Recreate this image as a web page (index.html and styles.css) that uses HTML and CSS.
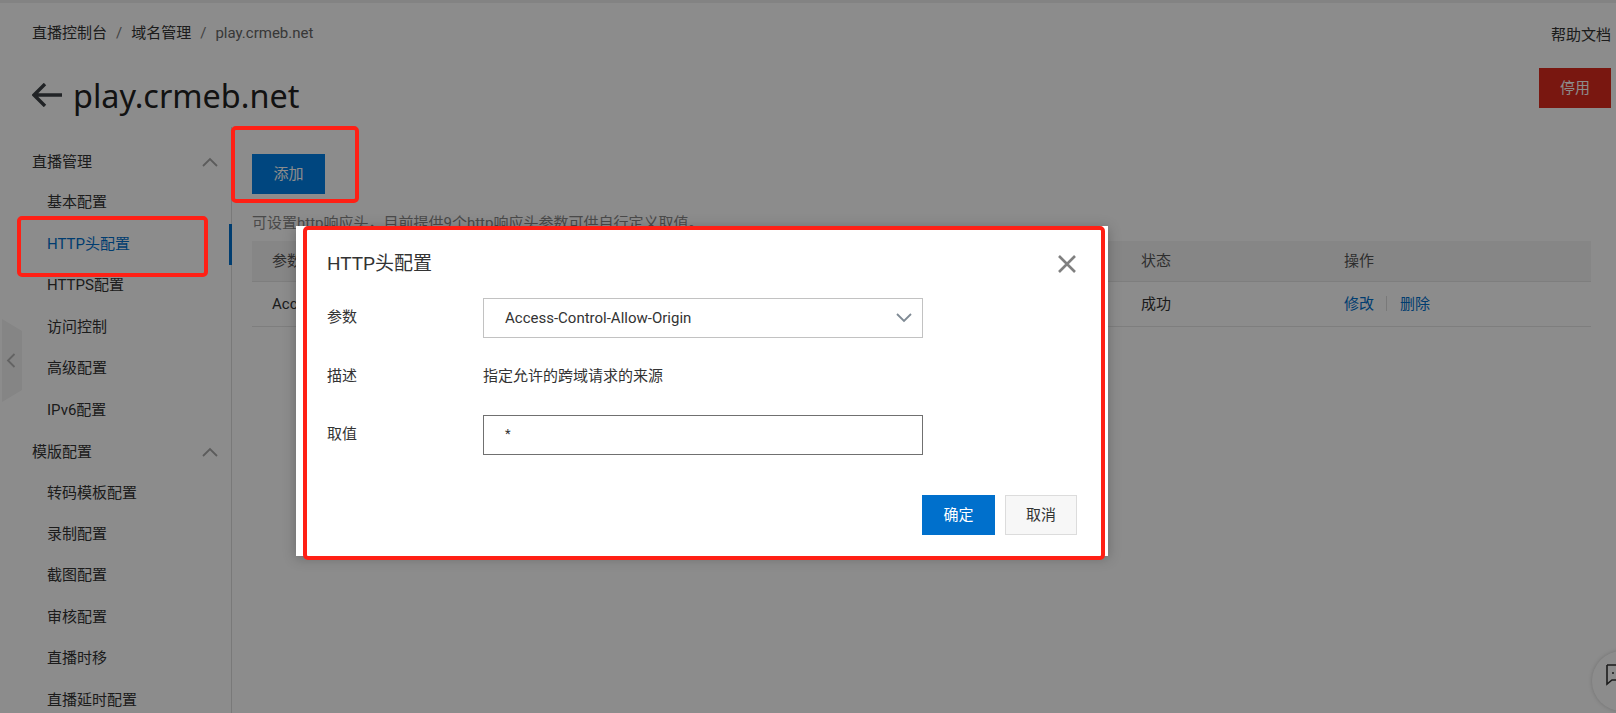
FILE: index.html
```html
<!DOCTYPE html>
<html lang="zh-CN">

<head>
  <meta charset="UTF-8">
  <meta name="viewport" content="width=device-width, initial-scale=1.0">
  <title>play.crmeb.net</title>
  <link rel="stylesheet" href="styles.css">
</head>

<body>

  <div class="topline"></div>

  <div class="header">
    <div class="crumbs">
      <a href="#">直播控制台</a>
      <span class="sep">/</span>
      <a href="#">域名管理</a>
      <span class="sep">/</span>
      <span class="current">play.crmeb.net</span>
    </div>
    <a href="#" class="help-link">帮助文档</a>
  </div>

  <div class="title-row">
    <div class="title">
      <svg class="back-icon" width="30" height="24" viewBox="0 0 30 24">
        <path d="M13 1 L2 12 L13 23 M2 12 H30" fill="none" stroke="#3c4146" stroke-width="3.4"></path>
      </svg>
      <h1>play.crmeb.net</h1>
    </div>
    <button class="stop-button">停用</button>
  </div>

  <div class="columns">
    <div class="sidebar">
      <div class="group">直播管理
        <svg width="16" height="10" viewBox="0 0 16 10"><path d="M1 9 L8 2 L15 9" fill="none" stroke="#a8a8a8" stroke-width="1.8"></path></svg>
      </div>
      <a href="#" class="item">基本配置</a>
      <a href="#" class="item active">HTTP头配置</a>
      <a href="#" class="item">HTTPS配置</a>
      <a href="#" class="item">访问控制</a>
      <a href="#" class="item">高级配置</a>
      <a href="#" class="item">IPv6配置</a>
      <div class="group">模版配置
        <svg width="16" height="10" viewBox="0 0 16 10"><path d="M1 9 L8 2 L15 9" fill="none" stroke="#a8a8a8" stroke-width="1.8"></path></svg>
      </div>
      <a href="#" class="item">转码模板配置</a>
      <a href="#" class="item">录制配置</a>
      <a href="#" class="item">截图配置</a>
      <a href="#" class="item">审核配置</a>
      <a href="#" class="item">直播时移</a>
      <a href="#" class="item">直播延时配置</a>
    </div>

    <div class="main">
      <button class="add-button">添加</button>
      <p class="hint">可设置http响应头，目前提供9个http响应头参数可供自行定义取值。</p>

      <table class="list">
        <tr>
          <th class="col-name">参数</th>
          <th class="col-state">状态</th>
          <th>操作</th>
        </tr>
        <tr>
          <td>Access-Control-Allow-Origin</td>
          <td>成功</td>
          <td>
            <a href="#">修改</a><span class="bar"></span><a href="#">删除</a>
          </td>
        </tr>
      </table>
    </div>
  </div>

  <div class="collapse-handle">
    <svg width="10" height="15" viewBox="0 0 10 15"><path d="M8.5 1 L2 7.5 L8.5 14" fill="none" stroke="#b4b4b4" stroke-width="1.8"></path></svg>
  </div>

  <div class="chat-float">
    <svg width="12" height="22" viewBox="0 0 12 22"><path d="M1 1 H12 M1 1 V20 L6 16 H12 M6 9 h2" fill="none" stroke="#333" stroke-width="1.6"></path></svg>
  </div>

  <div class="overlay"></div>

  <div class="modal">
    <div class="modal-head">
      <h2>HTTP头配置</h2>
      <svg width="18" height="18" viewBox="0 0 18 18"><path d="M1 1 L17 17 M17 1 L1 17" fill="none" stroke="#808080" stroke-width="2.6"></path></svg>
    </div>

    <div class="form-row">
      <label>参数</label>
      <div class="field select">
        <span>Access-Control-Allow-Origin</span>
        <svg width="16" height="10" viewBox="0 0 16 10"><path d="M1 1 L8 8 L15 1" fill="none" stroke="#7f8a94" stroke-width="1.8"></path></svg>
      </div>
    </div>

    <div class="form-row desc-row">
      <label>描述</label>
      <div class="desc-text">指定允许的跨域请求的来源</div>
    </div>

    <div class="form-row">
      <label>取值</label>
      <div class="field value">*</div>
    </div>

    <div class="modal-foot">
      <button class="ok-button">确定</button>
      <button class="cancel-button">取消</button>
    </div>
  </div>

  <div class="mark mark-add"></div>
  <div class="mark mark-nav"></div>
  <div class="mark mark-modal"></div>

</body>

</html>
```

FILE: styles.css
```css
* {
  box-sizing: border-box;
}

html,
body {
  height: 100%;
}

body {
  margin: 0;
  overflow: hidden;
  background: white;
  color: #333;
  font-family: Roboto, "Noto Sans CJK SC", sans-serif;
  font-size: 15px;
  line-height: 20px;
}

a {
  color: inherit;
  text-decoration: none;
}

button {
  padding: 0 0 3px;
  border: none;
  font-family: inherit;
  font-size: 15px;
  cursor: pointer;
}

.topline {
  height: 3px;
  background: #efefef;
}

.header {
  display: flex;
  justify-content: space-between;
  padding: 20px 5px 0 32px;
}

.crumbs {
  display: flex;
}

.sep {
  margin: 0 9px;
  color: #777;
}

.current {
  color: #666;
}

.help-link {
  margin-top: 2px;
}

.title-row {
  display: flex;
  justify-content: space-between;
  padding: 23px 5px 0 32px;
}

.title {
  display: flex;
  align-items: center;
  height: 54px;
}

.back-icon {
  margin-right: 11px;
}

h1 {
  margin: 0;
  font-family: "Noto Sans", sans-serif;
  font-size: 32.4px;
  font-weight: 400;
  color: #222;
}

.stop-button {
  width: 72px;
  height: 40px;
  background: #dc2a1e;
  color: white;
}

.columns {
  display: flex;
  height: 600px;
  margin-top: 5px;
}

.sidebar {
  width: 232px;
  padding-top: 14px;
  border-right: 1px solid #dcdcdc;
  flex-shrink: 0;
}

.group {
  display: flex;
  justify-content: space-between;
  align-items: center;
  height: 41.45px;
  padding: 0 13px 0 32px;
}

.item {
  display: block;
  position: relative;
  height: 41.45px;
  padding-left: 47px;
  line-height: 40.5px;
}

.item.active {
  color: #0070cc;
}

.item.active::after {
  content: "";
  position: absolute;
  right: -1px;
  top: 0;
  width: 3px;
  height: 41px;
  background: #0070cc;
}

.main {
  flex: 1;
  padding: 27px 25px 0 20px;
}

.add-button {
  display: block;
  width: 73px;
  height: 40px;
  background: #0080e8;
  color: white;
}

.hint {
  margin: 19px 0 8px;
  color: #888;
}

.list {
  width: 100%;
  border-collapse: collapse;
  table-layout: fixed;
}

.list th {
  height: 40px;
  padding: 0 0 0 20px;
  background: #f5f5f5;
  border-bottom: 1px solid #e5e5e5;
  font-weight: 400;
  text-align: left;
  color: #555;
}

.list td {
  height: 45px;
  padding: 0 0 0 20px;
  border-bottom: 1px solid #e5e5e5;
}

.col-name {
  width: 869px;
}

.col-state {
  width: 203px;
}

.list a {
  color: #0070cc;
}

.bar {
  display: inline-block;
  width: 1px;
  height: 15px;
  margin: 0 13px 0 12px;
  background: #dcdcdc;
  vertical-align: -2px;
}

.collapse-handle {
  position: absolute;
  left: 2px;
  top: 319px;
  display: flex;
  align-items: center;
  width: 20px;
  height: 83px;
  padding-left: 4px;
  background: #f2f2f2;
  clip-path: polygon(0 0, 100% 12px, 100% 71px, 0 100%);
}

.chat-float {
  position: absolute;
  left: 1592px;
  top: 651px;
  width: 60px;
  height: 60px;
  padding: 13px 0 0 14px;
  border-radius: 50%;
  background: white;
  box-shadow: 0 0 4px rgba(0, 0, 0, 0.2);
}

.overlay {
  position: absolute;
  left: 0;
  top: 0;
  width: 100%;
  height: 100%;
  background: rgba(0, 0, 0, 0.45);
}

.modal {
  position: absolute;
  left: 296px;
  top: 226px;
  width: 812px;
  height: 330px;
  padding: 24px 32px 0 31px;
  background: white;
  box-shadow: 0 2px 12px rgba(0, 0, 0, 0.25);
}

.modal-head {
  display: flex;
  justify-content: space-between;
  align-items: center;
  height: 28px;
  margin-bottom: 20px;
}

h2 {
  margin: 0;
  font-size: 19px;
  font-weight: 400;
  color: #333;
}

.form-row {
  display: flex;
  align-items: center;
}

.form-row label {
  width: 156px;
  margin-top: -2px;
}

.desc-row {
  height: 77px;
}

.desc-text {
  margin-top: -2px;
}

.field {
  width: 440px;
  height: 40px;
  padding: 0 21px;
  border: 1px solid #c2c2c2;
  line-height: 38px;
}

.select {
  display: flex;
  justify-content: space-between;
  align-items: center;
  padding-right: 10px;
}

.value {
  border-color: #707070;
  font-size: 13px;
  line-height: 35px;
}

.modal-foot {
  display: flex;
  justify-content: flex-end;
  gap: 10px;
  margin: 40px -1px 0 0;
}

.ok-button {
  width: 73px;
  height: 40px;
  background: #0070cc;
  color: white;
}

.cancel-button {
  width: 72px;
  height: 40px;
  background: #f7f7f7;
  border: 1px solid #dcdcdc;
  color: #333;
}

.mark {
  position: absolute;
  border: 4px solid #ff2015;
  border-radius: 5px;
}

.mark-add {
  left: 231px;
  top: 126px;
  width: 128px;
  height: 77px;
}

.mark-nav {
  left: 17px;
  top: 216px;
  width: 191px;
  height: 61px;
}

.mark-modal {
  left: 303px;
  top: 226px;
  width: 802px;
  height: 334px;
}
```
